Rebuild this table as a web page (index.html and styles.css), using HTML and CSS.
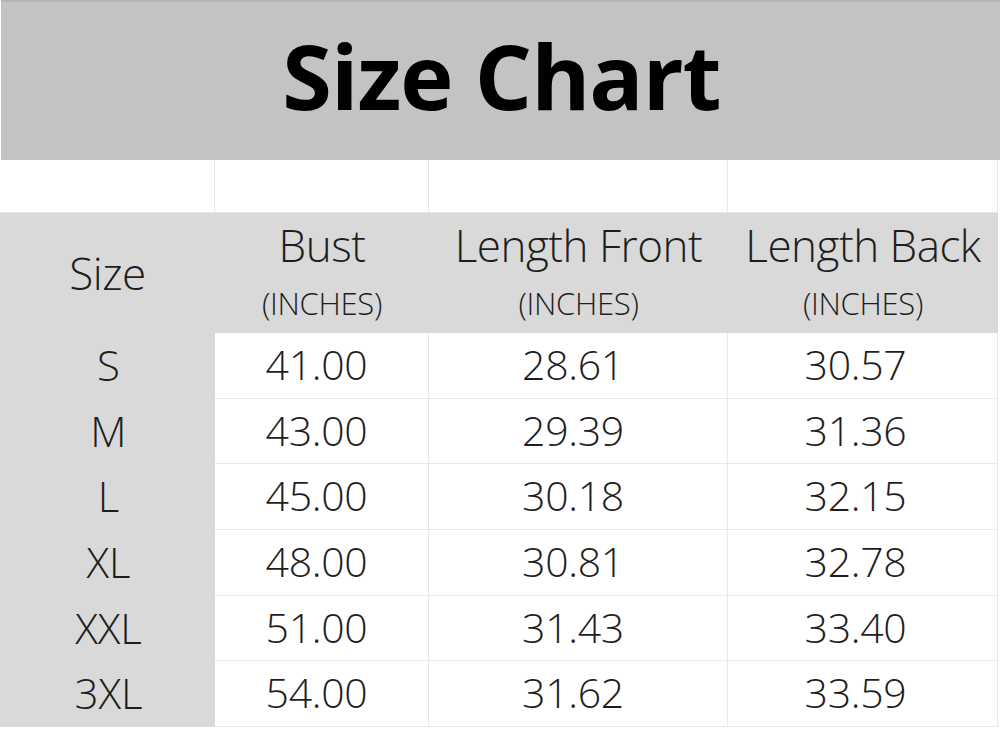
FILE: index.html
```html
<!DOCTYPE html>
<html>
<head>
<meta charset="utf-8">
<link rel="stylesheet" href="styles.css">
</head>
<body>
<div class="page">
  <div class="title">Size Chart</div>
  <div class="grid">
    <div class="cell blank first"></div>
    <div class="cell blank"></div>
    <div class="cell blank"></div>
    <div class="cell blank last"></div>

    <div class="cell head first"><span class="hname">Size</span></div>
    <div class="cell head"><span class="hname">Bust</span><span class="unit">(INCHES)</span></div>
    <div class="cell head"><span class="hname">Length Front</span><span class="unit">(INCHES)</span></div>
    <div class="cell head last"><span class="hname">Length Back</span><span class="unit">(INCHES)</span></div>

    <div class="cell size">S</div><div class="cell val">41.00</div><div class="cell val">28.61</div><div class="cell val last">30.57</div>
    <div class="cell size">M</div><div class="cell val">43.00</div><div class="cell val">29.39</div><div class="cell val last">31.36</div>
    <div class="cell size">L</div><div class="cell val">45.00</div><div class="cell val">30.18</div><div class="cell val last">32.15</div>
    <div class="cell size">XL</div><div class="cell val">48.00</div><div class="cell val">30.81</div><div class="cell val last">32.78</div>
    <div class="cell size">XXL</div><div class="cell val">51.00</div><div class="cell val">31.43</div><div class="cell val last">33.40</div>
    <div class="cell size">3XL</div><div class="cell val">54.00</div><div class="cell val">31.62</div><div class="cell val last">33.59</div>
  </div>
</div>
</body>
</html>
```
FILE: styles.css
```css
* { box-sizing: border-box; }
html, body { margin: 0; padding: 0; background: #ffffff; }
.page {
  width: 1000px;
  height: 731px;
  overflow: hidden;
  font-family: "Open Sans", "Noto Sans", sans-serif;
  color: #1e1e1e;
}
.title {
  height: 160px;
  background: #c3c3c3;
  border-top: 2px solid #b5b5b5;
  margin-left: 1px;
  display: flex;
  align-items: center;
  justify-content: center;
  font-weight: 700;
  font-size: 90px;
  color: #000;
  letter-spacing: -1px;
  padding-bottom: 12px;
  padding-left: 2px;
}
.grid {
  display: grid;
  grid-template-columns: 215px 214px 299px 270px;
  grid-template-rows: 53px 120px repeat(6, 65.7px);
}
.cell {
  display: flex;
  align-items: center;
  justify-content: center;
  font-weight: 300;
  border-right: 1px solid #e8e8e8;
  border-bottom: 1px solid #e8e8e8;
}
.blank { background: #fff; }
.head {
  background: #d9d9d9;
  border: none;
  flex-direction: column;
  justify-content: flex-start;
  padding-top: 5px;
}
.hname {
  font-size: 44px;
  line-height: 54px;
  letter-spacing: -0.5px;
  white-space: nowrap;
}
.unit {
  font-size: 31px;
  line-height: 40px;
  margin-top: 11px;
  letter-spacing: -0.3px;
}
.head.first {
  justify-content: center;
  padding-top: 0;
}
.size {
  background: #d9d9d9;
  border-right: none;
  border-bottom: none;
  font-size: 42px;
  padding-left: 2px;
  padding-bottom: 3px;
}
.val {
  font-size: 41px;
  letter-spacing: -0.3px;
  padding-right: 10px;
  padding-bottom: 3px;
}
.val.last {
  padding-right: 14px;
}
```
